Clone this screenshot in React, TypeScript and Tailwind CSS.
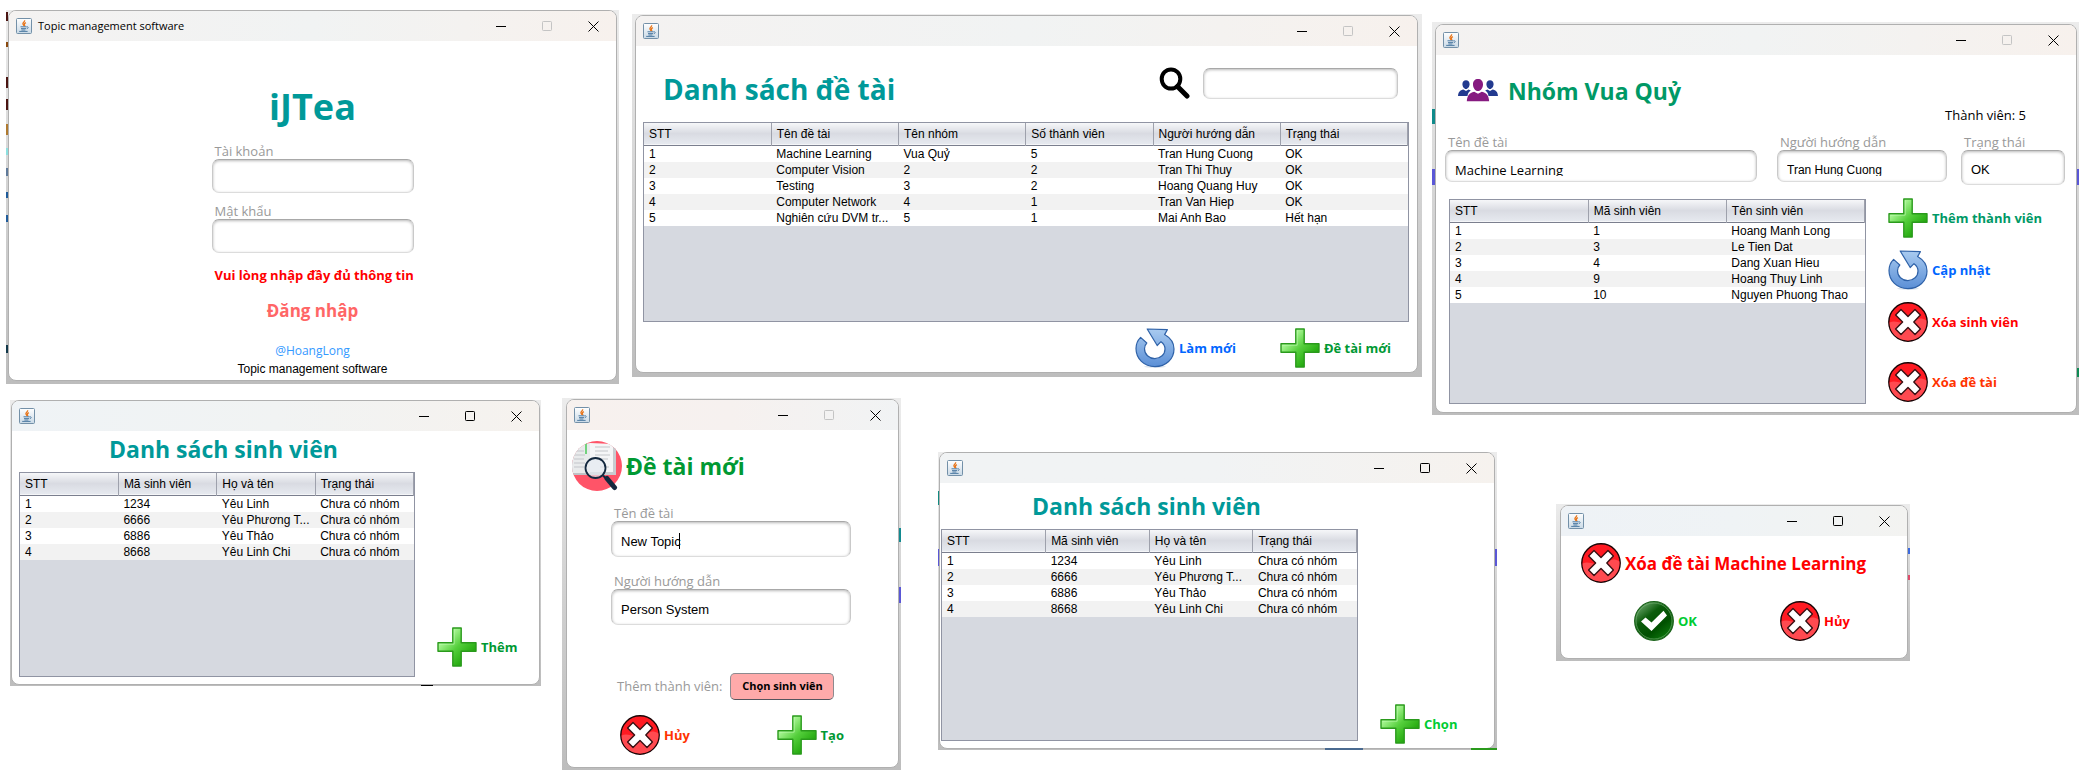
import React, { useId } from 'react';

/* ---------- icons ---------- */

function SharedGradients() {
  return (
    <svg width="0" height="0" className="absolute" aria-hidden="true">
      <defs>
        <linearGradient id="g-plus" x1="0" y1="0" x2="1" y2="1">
          <stop offset="0.2" stopColor="#b4fba0" />
          <stop offset="0.5" stopColor="#55cf3c" />
          <stop offset="0.85" stopColor="#18a004" />
        </linearGradient>
        <linearGradient id="g-refresh" x1="0" y1="0" x2="0" y2="1">
          <stop offset="0" stopColor="#a9cbf0" />
          <stop offset="1" stopColor="#5b8fd6" />
        </linearGradient>
        <linearGradient id="g-check" x1="0" y1="0" x2="0.8" y2="1">
          <stop offset="0" stopColor="#8fc28f" />
          <stop offset="0.4" stopColor="#0c5c0c" />
          <stop offset="0.7" stopColor="#005000" />
          <stop offset="1" stopColor="#0f7d0f" />
        </linearGradient>
        <linearGradient id="g-java" x1="0" y1="0" x2="0" y2="1">
          <stop offset="0" stopColor="#ffffff" />
          <stop offset="1" stopColor="#c9d9e6" />
        </linearGradient>
      </defs>
    </svg>
  );
}

function JavaIcon() {
  return (
    <svg width="16" height="16" viewBox="0 0 16 16" aria-hidden="true">
      <rect x="0.5" y="0.5" width="15" height="15" rx="1" fill="url(#g-java)" stroke="#7390a8" />
      <path d="M8.6 2.2c.6 1.6-2.2 2.3-1.7 3.7.2.7.8 1.1 1 2M9.9 4.6c-1.3.7-2 1.3-1.4 2.2.4.6.3 1-.1 1.4" fill="none" stroke="#e8761c" strokeWidth="1.3" />
      <path d="M4.5 8.8h6M5 10.6h5M10.6 8.9c2.2-.6 2 1.6.1 1.9M5.4 12h4M3.2 13.4h8.4" fill="none" stroke="#4f7ba3" strokeWidth="1" />
    </svg>
  );
}

function PlusIcon() {
  return (
    <svg width="40" height="40" viewBox="0 0 40 40" aria-hidden="true" className="shrink-0">
      <path d="M15.8 1h8.4v14.8H39v8.4H24.2V39h-8.4V24.2H1v-8.4h14.8z" fill="url(#g-plus)" stroke="#2a9a1c" strokeWidth="1.4" strokeLinejoin="round" />
      <path d="M17.2 2.4v14.8H2.4" fill="none" stroke="#c8ffba" strokeWidth="0.8" opacity="0.7" />
    </svg>
  );
}

function RefreshIcon() {
  return (
    <svg width="40" height="40" viewBox="0 0 40 40" aria-hidden="true" className="shrink-0">
      <ellipse cx="20" cy="38.6" rx="11" ry="1.2" fill="#dfe6ee" />
      <path
        d="M12.2 1 32.4 1.6 29.6 6.6C35.5 10 39 15.4 39 21c0 10-8 17.6-19 17.6S1 30.8 1 20.6c0-4.3 1.6-8.2 4.6-11.2l6.2 5.6c-1.5 1.6-2.3 3.5-2.3 5.700 0 5.600 4.500 9.900 10.300 9.900s10.200-4.300 10.200-9.700c0-3-1.400-5.400-4-7.200l-3.800 3.800z"
        fill="url(#g-refresh)"
        stroke="#2f62a8"
        strokeWidth="1.2"
        strokeLinejoin="round"
      />
    </svg>
  );
}

function CancelIcon() {
  return (
    <svg width="40" height="40" viewBox="0 0 40 40" aria-hidden="true" className="shrink-0">
      <circle cx="20" cy="20" r="19.2" fill="#ff1a22" stroke="#1a0506" strokeWidth="1.4" />
      <path d="M1.6 20.5C8 17.5 13 23 20 20.5S32 14 38.4 18.5C39 30 31 38.4 20 38.4S1.6 30.5 1.6 20.5z" fill="#ff4a50" />
      <path
        d="M13 7.6 20 14.6 27 7.6 32.4 13 25.8 20 32.4 27 27 32.4 20 25.4 13 32.4 7.6 27 14.6 20 7.6 13z"
        fill="#ffffff"
        stroke="#3a1013"
        strokeWidth="1.4"
        strokeLinejoin="round"
      />
    </svg>
  );
}

function CheckIcon() {
  return (
    <svg width="40" height="40" viewBox="0 0 40 40" aria-hidden="true" className="shrink-0">
      <circle cx="20" cy="20" r="19.3" fill="url(#g-check)" stroke="#1c641c" strokeWidth="1.3" />
      <circle cx="20" cy="20" r="18" fill="none" stroke="#7fb77f" strokeWidth="0.8" opacity="0.7" />
      <path d="M7 20.5 11.5 16.5 17.5 21.5 29.500 9.800 33 14.500 17.500 30z" fill="#ffffff" />
    </svg>
  );
}

function SearchIcon() {
  return (
    <svg width="32" height="32" viewBox="0 0 32 32" aria-hidden="true" className="shrink-0">
      <ellipse cx="12" cy="12" rx="9.3" ry="9.6" fill="none" stroke="#000" strokeWidth="4" />
      <path d="M18.500 19.500 28 29" stroke="#000" strokeWidth="5" strokeLinecap="round" />
    </svg>
  );
}

function GroupIcon() {
  return (
    <svg width="40" height="24" viewBox="0 0 40 24" aria-hidden="true" className="shrink-0">
      <g fill="#223a8f">
        <path d="M4.400 5c0-2.400 1.500-3.800 3.600-3.800S11.600 2.600 11.600 5 10 10 8 10 4.400 7.400 4.400 5zM0 17c.4-4 2-5.600 5.400-6.400L8 12l2.600-1.400 2.200.8C10.400 13 9.800 14.600 9.500 17z" />
        <path d="M28.400 5c0-2.400 1.500-3.800 3.600-3.800s3.600 1.400 3.600 3.800S34 10 32 10s-3.600-2.600-3.600-5zM40 17c-.4-4-2-5.600-5.400-6.400L32 12l-2.600-1.400-2.200.8c2.400 1.600 3 3.200 3.300 5.600z" />
      </g>
      <path d="M15 5.400C15 2 17 0 20 0s5 2 5 5.400S22.800 12 20 12s-5-3.200-5-6.600zM8.800 22.300c.5-5.600 2.400-8.300 7.400-9.500L20 14.800l3.800-2c5 1.200 6.900 3.900 7.400 9.500z" fill="#861a80" />
    </svg>
  );
}

function TopicIcon() {
  const clip = useId();
  return (
    <svg width="50" height="50" viewBox="0 0 50 50" aria-hidden="true" className="shrink-0">
      <clipPath id={clip}>
        <circle cx="25" cy="25" r="25" />
      </clipPath>
      <g clipPath={`url(#${clip})`}>
        <rect width="50" height="50" fill="#ff5468" />
        <path d="M0 8 18 4V34H0z" fill="#bfc2c6" />
        <path d="M0 5 18 2V32H0z" fill="#e9ebec" />
        <path d="M18 3 44 4V34H18z" fill="#c9ccd0" />
        <path d="M18 2 41 3V31H18z" fill="#f5f6f7" />
        <path d="M2 10h10M2 14h11M2 18h10M2 22h11M2 26h10M23 6h15M23 10h13M23 14h15M23 18h13M28 26h9" stroke="#c3c6ca" strokeWidth="1.2" />
        <path d="M14 2v11" stroke="#54cc62" strokeWidth="1.6" />
      </g>
      <circle cx="23.5" cy="27" r="10" fill="#e4e9f0" fillOpacity="0.7" stroke="#14293f" strokeWidth="1.8" />
      <path d="M31 34.500 34 37.500" stroke="#14293f" strokeWidth="2" />
      <path d="M35 37.500 42.500 46.500" stroke="#14293f" strokeWidth="5" strokeLinecap="round" />
    </svg>
  );
}

/* ---------- window chrome ---------- */

type WindowProps = {
  frame: string;
  title?: string;
  label: string;
  resizable?: boolean;
  tint?: string;
  children: React.ReactNode;
};

function AppWindow({ frame, title, label, resizable = false, tint = 'from-[#f4f2f1] via-[#f1f3f3] to-[#f7f1ed]', children }: WindowProps) {
  return (
    <div className={`absolute flex bg-linear-to-b from-[#ececec] via-[#d2d2d2] to-[#bdbdbd] ${frame}`}>
      <section aria-label={label} className="flex min-w-0 flex-1 flex-col overflow-hidden rounded-lg border border-[#b0b0b0] bg-white">
        <header className={`flex h-[30px] shrink-0 items-center bg-linear-to-r pl-[7px] ${tint}`}>
          <JavaIcon />
          <span className="ml-1.5 flex-1 text-[11px] whitespace-nowrap">{title}</span>
          <button type="button" aria-label="Minimize" className="flex h-full w-[46px] items-center justify-center">
            <svg width="11" height="11" viewBox="0 0 11 11">
              <path d="M0 5.500h10" stroke="#000" />
            </svg>
          </button>
          <button type="button" aria-label="Maximize" disabled={!resizable} className="flex h-full w-[46px] items-center justify-center text-black disabled:text-[#c4c4c4]">
            <svg width="11" height="11" viewBox="0 0 11 11">
              <rect x="0.5" y="0.5" width="9" height="9" rx="0.8" fill="none" stroke="currentColor" />
            </svg>
          </button>
          <button type="button" aria-label="Close" className="flex h-full w-[46px] items-center justify-center">
            <svg width="11" height="11" viewBox="0 0 11 11">
              <path d="M0.500 0.500l10 10M10.500 0.500l-10 10" stroke="#000" />
            </svg>
          </button>
        </header>
        {children}
      </section>
    </div>
  );
}

/* ---------- controls ---------- */

const box =
  'w-full rounded-[7px] border border-[#c9c9c9] border-t-[#a8a8a8] border-b-[#dcdcdc] bg-white shadow-[inset_0_1px_3px_rgba(0,0,0,0.28)]';

type FieldProps = {
  label: string;
  value?: string;
  type?: string;
  size?: string;
  className?: string;
  caret?: boolean;
};

function Field({ label, value = '', type = 'text', size = 'h-[34px]', className = '', caret = false }: FieldProps) {
  const id = useId();
  return (
    <div className={`relative flex flex-col ${className}`}>
      <label htmlFor={id} className="h-4 pl-[3px] text-[13px] leading-4 whitespace-nowrap text-[#999999]">
        {label}
      </label>
      <input id={id} type={type} defaultValue={value} className={`${box} ${size} px-[9px] pt-1 font-['Liberation_Sans',sans-serif] text-[13px] outline-none`} />
      {caret && <span className="absolute top-7 left-[68px] h-4 w-px bg-black" />}
    </div>
  );
}

/* Field whose text line is taller than the room left for it, so descenders are cut. */
function TightField({ label, value, className = '', font = '' }: FieldProps & { font?: string }) {
  const id = useId();
  return (
    <div className={`flex flex-col ${className}`}>
      <label htmlFor={id} className="h-4 pl-[3px] text-[13px] leading-4 whitespace-nowrap text-[#999999]">
        {label}
      </label>
      <div className={`${box} h-8 px-[9px] pt-[11px]`}>
        <div className="h-3.5 overflow-hidden">
          <input id={id} type="text" defaultValue={value} className={`block h-4 w-full outline-none ${font}`} />
        </div>
      </div>
    </div>
  );
}

function IconButton({ icon, color, className = '', children }: { icon: React.ReactNode; color: string; className?: string; children: React.ReactNode }) {
  return (
    <button type="button" className={`flex h-10 items-center gap-1 text-[13px] font-bold whitespace-nowrap ${color} ${className}`}>
      {icon}
      <span className="pt-0.5">{children}</span>
    </button>
  );
}

function DataTable({ label, head, rows, className }: { label: string; head: string[]; rows: string[][]; className: string }) {
  return (
    <div className={`overflow-hidden border border-[#9094a3] bg-[#d6d9e0] font-['Liberation_Sans',sans-serif] text-xs ${className}`}>
      <table aria-label={label} className="w-full table-fixed border-collapse text-left">
        <thead>
          <tr className="h-[22px] border-b border-[#7b7f8e] bg-linear-to-b from-[#f6f7f9] via-[#d9dbe2] to-[#e6e9ef]">
            {head.map((h) => (
              <th key={h} className="border-r border-[#9ea1ac] p-0 pl-[5px] font-normal whitespace-nowrap">
                {h}
              </th>
            ))}
          </tr>
        </thead>
        <tbody>
          {rows.map((r) => (
            <tr key={r[0]} className="h-4 bg-white even:bg-[#f2f2f2]">
              {r.map((c, i) => (
                <td key={i} className="p-0 pl-[5px] leading-4 whitespace-nowrap">
                  {c}
                </td>
              ))}
            </tr>
          ))}
        </tbody>
      </table>
    </div>
  );
}

/* ---------- data ---------- */

const topics = [
  ['1', 'Machine Learning', 'Vua Quỷ', '5', 'Tran Hung Cuong', 'OK'],
  ['2', 'Computer Vision', '2', '2', 'Tran Thi Thuy', 'OK'],
  ['3', 'Testing', '3', '2', 'Hoang Quang Huy', 'OK'],
  ['4', 'Computer Network', '4', '1', 'Tran Van Hiep', 'OK'],
  ['5', 'Nghiên cứu DVM tr...', '5', '1', 'Mai Anh Bao', 'Hết hạn'],
];

const members = [
  ['1', '1', 'Hoang Manh Long'],
  ['2', '3', 'Le Tien Dat'],
  ['3', '4', 'Dang Xuan Hieu'],
  ['4', '9', 'Hoang Thuy Linh'],
  ['5', '10', 'Nguyen Phuong Thao'],
];

const students = [
  ['1', '1234', 'Yêu Linh', 'Chưa có nhóm'],
  ['2', '6666', 'Yêu Phương T...', 'Chưa có nhóm'],
  ['3', '6886', 'Yêu Thảo', 'Chưa có nhóm'],
  ['4', '8668', 'Yêu Linh Chi', 'Chưa có nhóm'],
];

const studentHead = ['STT', 'Mã sinh viên', 'Họ và tên', 'Trạng thái'];

/* Slivers of the windows lying behind, seen at the frame edges. */
const slivers = [
  'left-[6px] top-[12px] h-[9px] w-0.5 bg-[#4a1512]',
  'left-[6px] top-[42px] h-[5px] w-0.5 bg-[#8a4a10]',
  'left-[6px] top-[77px] h-[11px] w-0.5 bg-[#4a1512]',
  'left-[6px] top-[99px] h-[11px] w-0.5 bg-[#4a1512]',
  'left-[6px] top-[124px] h-[11px] w-0.5 bg-[#b07a30]',
  'left-[6px] top-[148px] h-[7px] w-0.5 bg-[#8ce0e0]',
  'left-[6px] top-[168px] h-[8px] w-0.5 bg-[#5f7a9a]',
  'left-[6px] top-[192px] h-[6px] w-0.5 bg-[#1f5b9a]',
  'left-[6px] top-[215px] h-[7px] w-0.5 bg-[#1f5b9a]',
  'left-[6px] top-[345px] h-[8px] w-0.5 bg-[#12384a]',
  'left-[1432px] top-[109px] h-[15px] w-[3px] bg-[#0f8a8a]',
  'left-[1432px] top-[169px] h-[16px] w-[3px] bg-[#5a57d6]',
  'left-[2077px] top-[169px] h-[16px] w-0.5 bg-[#5a57d6]',
  'left-[2077px] top-[368px] h-[9px] w-0.5 bg-[#0f8a55]',
  'left-[899px] top-[528px] h-[14px] w-0.5 bg-[#128a90]',
  'left-[899px] top-[587px] h-[16px] w-0.5 bg-[#5a57d6]',
  'left-[938px] top-[491px] h-[14px] w-px bg-[#128a80]',
  'left-[938px] top-[549px] h-[17px] w-px bg-[#5a57d6]',
  'left-[1495px] top-[549px] h-[17px] w-0.5 bg-[#5a57d6]',
  'left-[1325px] top-[748px] h-0.5 w-[38px] bg-[#4a6a90]',
  'left-[1471px] top-[748px] h-0.5 w-[26px] bg-[#2a9a1c]',
  'left-[421px] top-[685px] h-px w-[12px] bg-black',
  'left-[1908px] top-[548px] h-[6px] w-0.5 bg-[#3d6be0]',
  'left-[1908px] top-[575px] h-[5px] w-0.5 bg-[#e04a6a]',
];

/* ---------- page ---------- */

export default function App() {
  return (
    <main className="relative min-h-screen overflow-hidden bg-white font-['Open_Sans','Noto_Sans',sans-serif] text-black">
      <SharedGradients />

      <AppWindow frame="left-[6px] top-[10px] w-[613px] h-[374px] pl-0.5 pr-0.5 pb-[3px]" title="Topic management software" label="Login">
        <form className="flex flex-col items-center">
          <h1 className="mt-[42px] text-4xl leading-[48px] font-bold text-[#009999]">iJTea</h1>
          <Field label="Tài khoản" className="mt-3 w-[202px]" />
          <Field label="Mật khẩu" type="password" className="mt-2.5 w-[202px]" />
          <p className="mt-3 w-[202px] pl-[3px] text-[13px] leading-5 font-bold whitespace-nowrap text-[#ff0000]">Vui lòng nhập đầy đủ thông tin</p>
          <button type="button" className="mt-3.5 text-[17px] leading-6 font-bold text-[#ff6666]">
            Đăng nhập
          </button>
          <a href="#author" className="mt-5 text-xs leading-4 text-[#3399ff]">
            @HoangLong
          </a>
          <p className="mt-0.5 font-['Liberation_Sans',sans-serif] text-xs leading-4">Topic management software</p>
        </form>
      </AppWindow>

      <AppWindow frame="left-[632px] top-[14px] w-[790px] h-[363px] pt-px pl-[3px] pr-1 pb-1" label="Topic list">
        <div className="flex items-start justify-between pr-[19px] pl-[27px]">
          <h1 className="mt-[25px] text-[28px] leading-9 font-bold text-[#009999]">Danh sách đề tài</h1>
          <label className="mt-[21px] flex items-center gap-3">
            <SearchIcon />
            <input type="search" aria-label="Tìm kiếm" className={`${box} h-[31px] max-w-[195px] px-2 outline-none`} />
          </label>
        </div>
        <DataTable
          label="Danh sách đề tài"
          head={['STT', 'Tên đề tài', 'Tên nhóm', 'Số thành viên', 'Người hướng dẫn', 'Trạng thái']}
          rows={topics}
          className="mt-[15px] mr-2 ml-[7px] h-[200px]"
        />
        <div className="mt-1.5 flex justify-end gap-11 pr-[26px]">
          <IconButton icon={<RefreshIcon />} color="text-[#0066ff]">Làm mới</IconButton>
          <IconButton icon={<PlusIcon />} color="text-[#009933]">Đề tài mới</IconButton>
        </div>
      </AppWindow>

      <AppWindow frame="left-[1432px] top-[22px] w-[647px] h-[393px] pt-0.5 pl-[3px] pr-0.5 pb-0.5" label="Topic details">
        <div className="mt-5 flex h-8 items-center gap-2.5 pl-[22px]">
          <GroupIcon />
          <h1 className="text-[23px] leading-8 font-bold text-[#009966]">Nhóm Vua Quỷ</h1>
        </div>
        <p className="pr-[50px] text-right text-[13px] leading-4">Thành viên: 5</p>
        <div className="mt-[11px] flex items-start pl-[9px]">
          <TightField label="Tên đề tài" value="Machine Learning" className="w-[312px]" font="text-[13px] leading-4" />
          <TightField label="Người hướng dẫn" value="Tran Hung Cuong" className="ml-5 w-[170px]" font="font-['Liberation_Sans',sans-serif] text-xs leading-4" />
          <Field label="Trạng thái" value="OK" size="h-[35px]" className="ml-3.5 w-[104px]" />
        </div>
        <div className="mt-3 flex gap-[22px] pl-[13px]">
          <DataTable label="Thành viên" head={['STT', 'Mã sinh viên', 'Tên sinh viên']} rows={members} className="mt-0.5 h-[205px] w-[417px]" />
          <div className="flex flex-col gap-3 pt-px">
            <IconButton icon={<PlusIcon />} color="text-[#009966]">Thêm thành viên</IconButton>
            <IconButton icon={<RefreshIcon />} color="text-[#0066ff]">Cập nhật</IconButton>
            <IconButton icon={<CancelIcon />} color="text-[#ff0000]">Xóa sinh viên</IconButton>
            <IconButton icon={<CancelIcon />} color="text-[#ff3300]" className="mt-2">Xóa đề tài</IconButton>
          </div>
        </div>
      </AppWindow>

      <AppWindow frame="left-[10px] top-[400px] w-[531px] h-[286px] pl-px pr-px pb-px" label="Student list" resizable tint="from-[#eff3f6] via-[#f1f3f3] to-[#f6f2ee]">
        <h1 className="mt-[3px] pl-[97px] text-[23px] leading-[30px] font-bold text-[#009999]">Danh sách sinh viên</h1>
        <div className="mt-2 flex items-end gap-[22px] pl-[7px]">
          <DataTable label="Danh sách sinh viên" head={studentHead} rows={students} className="h-[205px] w-[396px]" />
          <IconButton icon={<PlusIcon />} color="text-[#009933]" className="mb-2.5">Thêm</IconButton>
        </div>
      </AppWindow>

      <AppWindow frame="left-[562px] top-[398px] w-[339px] h-[372px] pt-px pl-1 pr-0.5 pb-0.5" label="New topic" tint="from-[#f7f1ee] via-[#f6f1ef] to-[#f1f3f4]">
        <form className="flex flex-col">
          <div className="mt-[11px] flex items-center gap-1 pl-[5px]">
            <TopicIcon />
            <h1 className="text-[23px] font-bold text-[#009933]">Đề tài mới</h1>
          </div>
          <Field label="Tên đề tài" value="New Topic" size="h-9" className="mt-3.5 ml-11 w-60" caret />
          <Field label="Người hướng dẫn" value="Person System" size="h-9" className="mt-4 ml-11 w-60" />
          <div className="mt-12 flex items-center gap-2 pl-[50px]">
            <span className="text-[13px] whitespace-nowrap text-[#999999]">Thêm thành viên:</span>
            <button type="button" className="h-[27px] w-[104px] rounded-[5px] border border-[#8d8a8f] border-b-[#55555d] bg-[#ffaaaa] text-[11px] font-bold whitespace-nowrap">
              Chọn sinh viên
            </button>
          </div>
          <div className="mt-[15px] ml-[53px] flex w-56 justify-between">
            <IconButton icon={<CancelIcon />} color="text-[#ff3300]">Hủy</IconButton>
            <IconButton icon={<PlusIcon />} color="text-[#009933]">Tạo</IconButton>
          </div>
        </form>
      </AppWindow>

      <AppWindow frame="left-[938px] top-[452px] w-[559px] h-[298px] pl-px pr-0.5 pb-px" label="Choose students" resizable tint="from-[#f1f3f4] via-[#f1f3f4] to-[#f6f2ee]">
        <h1 className="mt-2 pl-[92px] text-[23px] leading-[30px] font-bold text-[#009999]">Danh sách sinh viên</h1>
        <div className="mt-2 flex items-end gap-[22px] pl-px">
          <DataTable label="Danh sách sinh viên" head={studentHead} rows={students} className="mb-[3px] h-[212px] w-[417px]" />
          <IconButton icon={<PlusIcon />} color="text-[#00cc33]">Chọn</IconButton>
        </div>
      </AppWindow>

      <AppWindow frame="left-[1556px] top-[504px] w-[354px] h-[157px] pt-px pl-1 pr-0.5 pb-0.5" label="Delete topic" resizable tint="from-[#eef2f6] via-[#eff3f5] to-[#f3f3f1]">
        <div className="mt-[7px] flex items-center gap-1 pl-5">
          <CancelIcon />
          <h1 className="pt-0.5 text-[17px] font-bold whitespace-nowrap text-[#ff0000]">Xóa đề tài Machine Learning</h1>
        </div>
        <div className="mt-[18px] flex gap-[83px] pl-[73px]">
          <IconButton icon={<CheckIcon />} color="text-[#00cc33]">OK</IconButton>
          <IconButton icon={<CancelIcon />} color="text-[#ff0000]">Hủy</IconButton>
        </div>
      </AppWindow>

      {slivers.map((s) => (
        <span key={s} className={`absolute ${s}`} />
      ))}
    </main>
  );
}
